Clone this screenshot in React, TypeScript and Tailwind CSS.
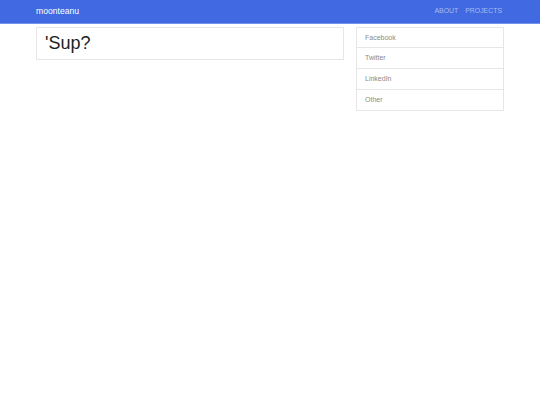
export default function App() {
  const links = ['Facebook', 'Twitter', 'LinkedIn', 'Other']

  return (
    <div className="min-h-screen bg-white font-['Liberation_Sans',Arial,sans-serif]">
      {/* Navbar */}
      <nav className="h-6 border-b border-[#7393ea] bg-[#4169e1]">
        <div className="mx-auto flex h-full w-[468px] items-center justify-between">
          <a href="#" className="text-[8.6px] text-white">
            moonteanu
          </a>
          <div className="flex gap-[7px] pr-[2px] text-[6.9px] uppercase text-[#a6bbf1]">
            <a href="#">About</a>
            <a href="#">Projects</a>
          </div>
        </div>
      </nav>

      {/* Content */}
      <div className="mx-auto mt-[3px] flex w-[468px] items-start gap-[12px]">
        <div className="h-[33px] w-[308px] border border-[#e6e6e6] px-[8px]">
          <h1 className="pt-[3px] text-[18px] leading-[24px] text-[#222]">'Sup?</h1>
        </div>
        <ul className="w-[148px] border border-[#e6e6e6]">
          {links.map((l, i) => (
            <li
              key={l}
              className={`px-[8px] text-[7px] text-[#8a8a8a] ${
                i > 0 ? 'h-[21px] border-t border-[#e6e6e6] leading-[20px]' : 'h-[19px] leading-[19px]'
              }`}
            >
              {l}
            </li>
          ))}
        </ul>
      </div>
    </div>
  )
}
